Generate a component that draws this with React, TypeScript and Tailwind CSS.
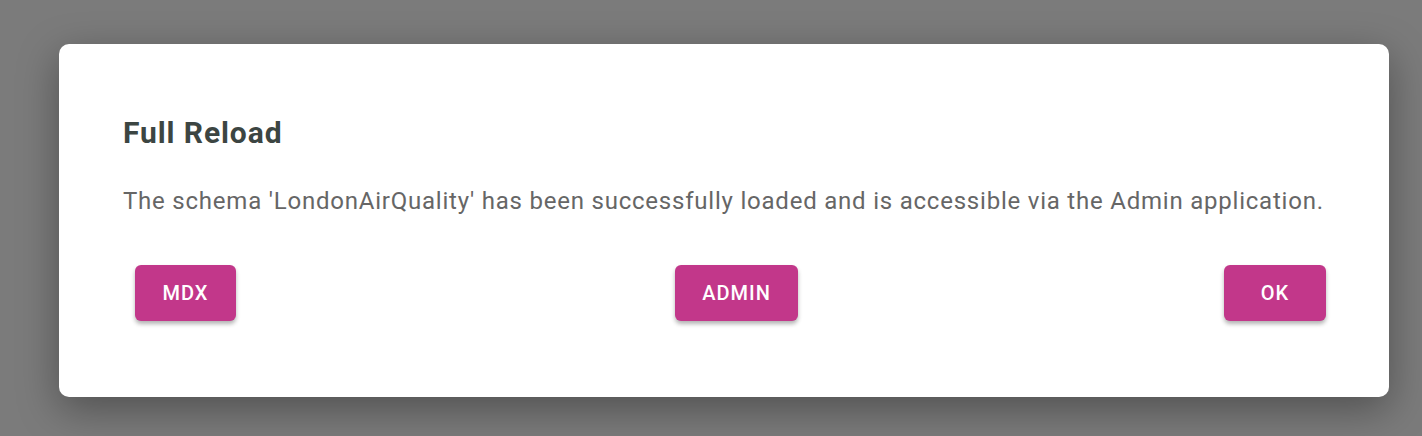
import React from "react";

export default function App() {
  const btn =
    "h-[56px] rounded-[6px] bg-[#c2378a] text-white text-[20px] font-medium tracking-[0.05em] shadow-[0_3px_4px_rgba(0,0,0,0.3)] flex items-center justify-center";
  return (
    <div
      className="w-[1422px] h-[436px] bg-[#7b7b7b] pt-[44px] pl-[59px]"
      style={{ fontFamily: "Roboto, 'Noto Sans', sans-serif" }}
    >
      <div className="w-[1330px] h-[353px] bg-white rounded-[10px] shadow-[0_12px_40px_rgba(0,0,0,0.35)] flex flex-col pt-[71px]">
        <h1 className="pl-[64px] text-[30px] leading-[36px] tracking-[0.03em] font-bold text-[#3c4542]">
          Full Reload
        </h1>
        <p className="pl-[64px] mt-[34px] text-[24px] leading-[32px] tracking-[0.0325em] text-[#666666] whitespace-nowrap">
          The schema 'LondonAirQuality' has been successfully loaded and is accessible via the Admin application.
        </p>
        <div className="flex pl-[76px] pr-[63px] mt-[48px]">
          <button className={`${btn} w-[101px]`}>MDX</button>
          <button className={`${btn} w-[123px] ml-[439px]`}>ADMIN</button>
          <button className={`${btn} w-[102px] ml-auto`}>OK</button>
        </div>
      </div>
    </div>
  );
}
